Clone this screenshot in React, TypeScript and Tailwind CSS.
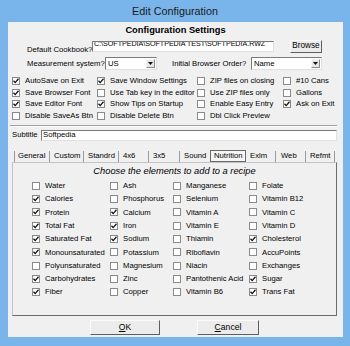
import React from "react";

function Check({ on }: { on: boolean }) {
  return (
    <span className="w-[8px] h-[8px] border border-[#8a8a8a] bg-white flex items-center justify-center shrink-0 box-border">
      {on && (
        <svg width="6" height="6" viewBox="0 0 6 6">
          <path d="M0.5 2.7 L2.2 4.6 L5.5 0.8" stroke="#111" strokeWidth="1.3" fill="none" />
        </svg>
      )}
    </span>
  );
}

function Item({ label, on, tall }: { label: string; on: boolean; tall?: boolean }) {
  return (
    <div className={tall ? "flex items-center gap-[5px] h-[13.3px]" : "flex items-center gap-[5px] h-[11.7px]"}>
      {label !== "" && <Check on={on} />}
      <span className="whitespace-nowrap">{label}</span>
    </div>
  );
}

function Arrow() {
  return (
    <span className="absolute right-[1px] top-[1px] bottom-[1px] w-[9px] bg-[#e6e6e6] border border-[#f8f8f8] border-r-[#8a8a8a] border-b-[#8a8a8a] flex items-center justify-center">
      <svg width="5" height="3" viewBox="0 0 5 3">
        <path d="M0 0 H5 L2.5 3 Z" fill="#111" />
      </svg>
    </span>
  );
}

const topItems: [string, boolean][] = [
  ["AutoSave on Exit", true],
  ["Save Window Settings", true],
  ["ZIP files on closing", false],
  ["#10 Cans", false],
  ["Save Browser Font", true],
  ["Use Tab key in the editor", false],
  ["Use ZIP files only", false],
  ["Gallons", false],
  ["Save Editor Font", true],
  ["Show Tips on Startup", true],
  ["Enable Easy Entry", false],
  ["Ask on Exit", true],
  ["Disable SaveAs Btn", false],
  ["Disable Delete Btn", false],
  ["Dbl Click Preview", false],
  ["", false],
];

const cols: [string, boolean][][] = [
  [
    ["Water", false],
    ["Calories", true],
    ["Protein", true],
    ["Total Fat", true],
    ["Saturated Fat", true],
    ["Monounsaturated", true],
    ["Polyunsaturated", false],
    ["Carbohydrates", true],
    ["Fiber", true],
  ],
  [
    ["Ash", false],
    ["Phosphorus", false],
    ["Calcium", true],
    ["Iron", true],
    ["Sodium", true],
    ["Potassium", false],
    ["Magnesium", false],
    ["Zinc", false],
    ["Copper", false],
  ],
  [
    ["Manganese", false],
    ["Selenium", false],
    ["Vitamin A", false],
    ["Vitamin E", false],
    ["Thiamin", false],
    ["Riboflavin", false],
    ["Niacin", false],
    ["Pantothenic Acid", false],
    ["Vitamin B6", false],
  ],
  [
    ["Folate", false],
    ["Vitamin B12", false],
    ["Vitamin C", false],
    ["Vitamin D", false],
    ["Cholesterol", true],
    ["AccuPoints", false],
    ["Exchanges", false],
    ["Sugar", true],
    ["Trans Fat", true],
  ],
];

const nutritionRows: [string, boolean][] = [];
for (let r = 0; r < 9; r++) for (let c = 0; c < 4; c++) nutritionRows.push(cols[c][r]);

export default function App() {
  return (
    <div className="w-[350px] h-[346px] bg-[#79b5ea] flex flex-col font-['Liberation_Sans',Arial,sans-serif] text-black text-[7.7px] overflow-hidden">
      <div className="h-[22px] flex items-center justify-center text-[10.8px] text-[#1a1a1a] leading-none">
        Edit Configuration
      </div>
      <div className="flex h-[315px]">
        <div className="w-[8px]" />
        <div className="w-[335px] h-[315px] bg-[#f0f0f0] flex flex-col">
          <div className="h-[18px] flex items-center justify-center font-bold text-[9.3px] leading-none">
            Configuration Settings
          </div>
          <div className="h-[13px] flex items-start pl-[19px]">
            <span className="pt-[5px] leading-[10px] whitespace-nowrap w-[65px]">Default Cookbook?</span>
            <div className="mt-[1px] h-[11px] w-[182px] bg-white border border-[#7a7a7a] border-r-[#e0e0e0] border-b-[#e0e0e0] pl-[1px] leading-[5px] whitespace-nowrap overflow-hidden text-[7.1px]">
              C:\SOFTPEDIA\SOFTPEDIA TEST\SOFTPEDIA.RWZ
            </div>
            <div className="ml-[16px] h-[12.5px] w-[32px] bg-[#ececec] border border-[#fbfbfb] border-r-[#5e5e5e] border-b-[#5e5e5e] flex items-center justify-center text-[8.2px] leading-none">
              Browse
            </div>
          </div>
          <div className="mt-[4px] h-[13px] flex items-center pl-[19px]">
            <span className="w-[78px] whitespace-nowrap leading-[13px]">Measurement system?</span>
            <div className="relative h-[13px] w-[52px] bg-white border border-[#7a7a7a] border-r-[#e0e0e0] border-b-[#e0e0e0] pl-[2px] flex items-center leading-none">
              US
              <Arrow />
            </div>
            <span className="ml-[15px] w-[79px] whitespace-nowrap leading-[13px]">Initial Browser Order?</span>
            <div className="relative h-[13px] w-[71px] bg-white border border-[#7a7a7a] border-r-[#e0e0e0] border-b-[#e0e0e0] pl-[2px] flex items-center leading-none">
              Name
              <Arrow />
            </div>
          </div>
          <div className="mt-[5px] ml-[4px] grid grid-cols-[85px_100px_86px_56px]">
            {topItems.map(([l, on], i) => (
              <Item key={i} label={l} on={on} />
            ))}
          </div>
          <div className="mt-[3px] ml-[2px] w-[327px] h-[2px] border-t border-t-[#a0a0a0] border-b border-b-white" />
          <div className="mt-[3px] h-[11px] flex items-center pl-[4px]">
            <span className="w-[29px] leading-none">Subtitle</span>
            <div className="h-[11px] w-[296px] bg-white border border-[#7a7a7a] border-r-[#e0e0e0] border-b-[#e0e0e0] pl-[1px] flex items-center leading-none">
              Softpedia
            </div>
          </div>
          <div className="mt-[10px] h-[11px] ml-[6px] flex items-stretch leading-none">
            <div className="w-[35px] border-l border-l-[#9a9a9a] pl-[3px] flex items-center">General</div>
            <div className="w-[34px] border-l border-l-[#9a9a9a] pl-[4px] flex items-center">Custom</div>
            <div className="w-[35px] border-l border-l-[#9a9a9a] pl-[4px] flex items-center">Standrd</div>
            <div className="w-[30px] border-l border-l-[#9a9a9a] pl-[4px] flex items-center">4x6</div>
            <div className="w-[31px] border-l border-l-[#9a9a9a] pl-[4px] flex items-center">3x5</div>
            <div className="w-[31px] border-l border-l-[#9a9a9a] pl-[4px] flex items-center">Sound</div>
            <div className="w-[36px] -mt-[1px] h-[12px] border border-[#6a6a6a] bg-[#f6f6f6] pl-[3px] flex items-center">Nutrition</div>
            <div className="w-[29px] pl-[4px] flex items-center">Exlm</div>
            <div className="w-[30px] border-l border-l-[#9a9a9a] pl-[5px] flex items-center">Web</div>
            <div className="w-[30px] border-l border-l-[#9a9a9a] border-r border-r-[#9a9a9a] pl-[4px] flex items-center">Refmt</div>
          </div>
          <div className="ml-[4px] w-[325px] h-[154px] border border-[#c4c4c4] border-r-[#6c6c6c] border-b-[#6c6c6c] flex flex-col">
            <div className="h-[16.4px] leading-[16.4px] text-center italic text-[9.3px]">
              Choose the elements to add to a recipe
            </div>
            <div className="pl-[19px] grid grid-cols-[78px_63px_76px_70px]">
              {nutritionRows.map(([l, on], i) => (
                <Item key={i} label={l} on={on} tall />
              ))}
            </div>
          </div>
          <div className="mt-[4px] flex pl-[82px]">
            <div className="h-[15px] w-[70px] bg-[#ececec] border border-[#fbfbfb] border-r-[#5e5e5e] border-b-[#5e5e5e] flex items-center justify-center text-[8.6px] leading-none">
              <span className="underline">O</span>K
            </div>
            <div className="ml-[37px] h-[15px] w-[62px] bg-[#ececec] border border-[#fbfbfb] border-r-[#5e5e5e] border-b-[#5e5e5e] flex items-center justify-center text-[8.6px] leading-none">
              <span className="underline">C</span>ancel
            </div>
          </div>
        </div>
      </div>
    </div>
  );
}
